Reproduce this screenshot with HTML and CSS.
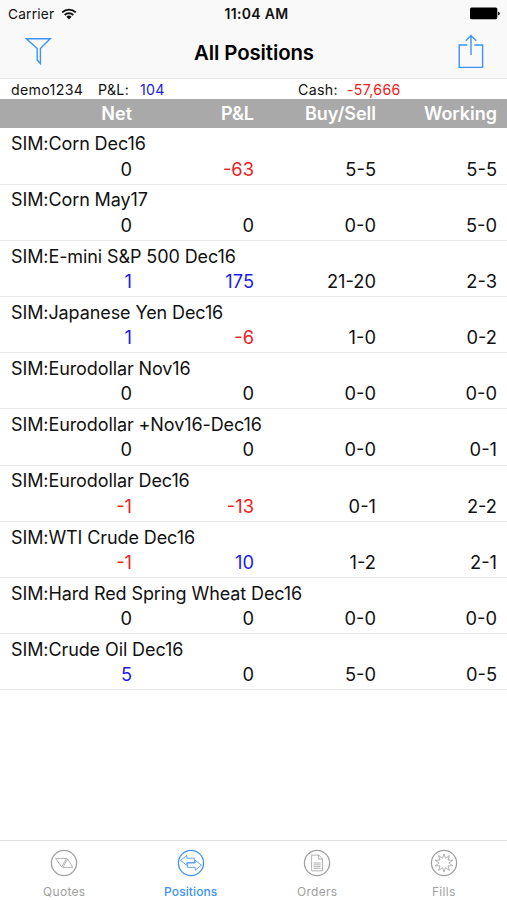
FILE: index.html
```html
<!DOCTYPE html>
<html lang="en">
	<head>
		<meta charset="utf-8">
		<title>All Positions</title>
		<link rel="stylesheet" href="styles.css">
	</head>
	<body>
		<div id="main">
			<div class="top">
				<div class="status">
					<div class="carrier"><span>Carrier</span>
						<svg width="16" height="12" viewBox="0 0 16 12">
							<path d="M1.2 4.4a9.7 9.7 0 0 1 13.6 0M3.7 7a6.1 6.1 0 0 1 8.6 0" fill="none" stroke="#111" stroke-width="1.9"/>
							<path d="M5.4 8.8a3.7 3.7 0 0 1 5.2 0L8 11.6z" fill="#111"/>
						</svg>
					</div>
					<div class="time">11:04 AM</div>
					<div class="battery">
						<svg width="30" height="13" viewBox="0 0 30 13">
							<rect x="0" y="0.5" width="27.3" height="11.8" rx="1.6"/>
							<path d="M28 4.6q1.8 .3 1.8 1.9t-1.8 1.9z"/>
						</svg>
					</div>
				</div>
				<div class="nav">
					<svg class="filter" width="27" height="28" viewBox="0 0 27 28">
						<path d="M1.4 1.8h23.8L15.4 11.6v14.9l-3.2-3.4V11.6z"/>
					</svg>
					<h1>All Positions</h1>
					<svg class="share" width="26" height="35" viewBox="0 0 26 35">
						<path d="M9.4 11H1.2v22.4h23.4V11h-8.2M13 21V1.6M7.8 6.8L13 1.6l5.2 5.2"/>
					</svg>
				</div>
			</div>
			<div class="account">
				<span class="user">demo1234</span>
				<span class="pl">P&amp;L:</span>
				<span class="total blue">104</span>
				<span class="cash">Cash:</span>
				<span class="red">-57,666</span>
			</div>
			<div class="cols head">
				<span>Net</span><span>P&amp;L</span><span>Buy/Sell</span><span>Working</span>
			</div>
			<div class="list">
				<div class="row">
					<div class="name">SIM:Corn Dec16</div>
					<div class="cols"><span>0</span><span class="red">-63</span><span>5-5</span><span>5-5</span></div>
				</div>
				<div class="row">
					<div class="name">SIM:Corn May17</div>
					<div class="cols"><span>0</span><span>0</span><span>0-0</span><span>5-0</span></div>
				</div>
				<div class="row">
					<div class="name">SIM:E-mini S&amp;P 500 Dec16</div>
					<div class="cols"><span class="blue">1</span><span class="blue">175</span><span>21-20</span><span>2-3</span></div>
				</div>
				<div class="row">
					<div class="name">SIM:Japanese Yen Dec16</div>
					<div class="cols"><span class="blue">1</span><span class="red">-6</span><span>1-0</span><span>0-2</span></div>
				</div>
				<div class="row">
					<div class="name">SIM:Eurodollar Nov16</div>
					<div class="cols"><span>0</span><span>0</span><span>0-0</span><span>0-0</span></div>
				</div>
				<div class="row">
					<div class="name">SIM:Eurodollar +Nov16-Dec16</div>
					<div class="cols"><span>0</span><span>0</span><span>0-0</span><span>0-1</span></div>
				</div>
				<div class="row">
					<div class="name">SIM:Eurodollar Dec16</div>
					<div class="cols"><span class="red">-1</span><span class="red">-13</span><span>0-1</span><span>2-2</span></div>
				</div>
				<div class="row">
					<div class="name">SIM:WTI Crude Dec16</div>
					<div class="cols"><span class="red">-1</span><span class="blue">10</span><span>1-2</span><span>2-1</span></div>
				</div>
				<div class="row">
					<div class="name">SIM:Hard Red Spring Wheat Dec16</div>
					<div class="cols"><span>0</span><span>0</span><span>0-0</span><span>0-0</span></div>
				</div>
				<div class="row">
					<div class="name">SIM:Crude Oil Dec16</div>
					<div class="cols"><span class="blue">5</span><span>0</span><span>5-0</span><span>0-5</span></div>
				</div>
			</div>
			<div class="tabs">
				<div class="tab">
					<svg width="28" height="28" viewBox="0 0 28 28">
						<circle cx="14" cy="14" r="12.6"/>
						<path class="thin" d="M5.6 9.4h11.2l-5.2 8.4zM12.8 18.4l5-8.4 5 8.4z"/>
					</svg>
					<span>Quotes</span>
				</div>
				<div class="tab active">
					<svg width="28" height="28" viewBox="0 0 28 28">
						<circle cx="14" cy="14" r="12.6"/>
						<path class="thin" d="M3.6 11.3l6.2-4.9v2.8h7.6v4.4H9.8v2.8zM24.4 16.2l-6.2 5v-2.8h-7.6V14h7.6v-2.8z"/>
					</svg>
					<span>Positions</span>
				</div>
				<div class="tab">
					<svg width="28" height="28" viewBox="0 0 28 28">
						<circle cx="14" cy="14" r="12.6"/>
						<path class="thin" d="M8.6 6.1h7.2l3.7 3.8v12H8.6zM15.6 6.1v4h3.9M10.6 14h7M10.6 15.8h7M10.6 17.6h7M10.6 19.3h7"/>
					</svg>
					<span>Orders</span>
				</div>
				<div class="tab">
					<svg width="28" height="28" viewBox="0 0 28 28">
						<circle cx="14" cy="14" r="12.6"/>
						<path class="thin" d="M14 4.8l1.5 4.5 3.9-2.7-1.4 4.5 4.8 0-3.9 2.9 3.9 2.8h-4.8l1.4 4.6-3.9-2.7-1.5 4.5-1.5-4.5-3.9 2.7 1.4-4.6H5.2l3.9-2.8-3.9-2.9H10L8.6 6.6l3.9 2.7z"/>
					</svg>
					<span>Fills</span>
				</div>
			</div>
		</div>
	</body>
</html>
```
FILE: styles.css
```css
body, html {
	margin:0;
	padding:0;
	font-family:Inter,"Liberation Sans",sans-serif;
	color:#111;
	background-color:#fff;
}
#main {
	display:flex;
	flex-direction:column;
	height:900px;
	overflow:hidden;
}
.top {
	height:78px;
	background-color:#f9f9f9;
	border-bottom:1px solid #e8e8e8;
}
.status {
	display:grid;
	grid-template-columns:1fr auto 1fr;
	align-items:center;
	height:27px;
	padding:0 7px 0 9px;
	font-size:13.7px;
}
.carrier {
	display:flex;
	align-items:center;
	gap:7px;
	letter-spacing:0.2px;
	margin-left:-1px;
}
.time {
	font-weight:600;
	font-size:14px;
	letter-spacing:0.3px;
	margin-left:4px;
}
.battery {
	display:flex;
	justify-content:flex-end;
}
.nav {
	display:flex;
	align-items:center;
	justify-content:space-between;
	height:48px;
	padding:0 23px 0 25px;
}
.nav svg {
	fill:none;
	stroke:#3d93f5;
	stroke-width:1.4;
}
h1 {
	margin:2px 2px 0 0;
	color:#000;
	font-size:20.4px;
	font-weight:600;
	letter-spacing:-0.1px;
}
.account {
	display:flex;
	align-items:center;
	height:20px;
	padding-left:11px;
	font-size:14.2px;
	letter-spacing:0.3px;
}
.user {
	width:87px;
}
.pl {
	width:42px;
}
.total {
	width:158px;
}
.cash {
	width:49px;
}
.cols {
	display:grid;
	grid-template-columns:132px 122px 122px 121px;
	text-align:right;
}
.head {
	height:29px;
	line-height:30px;
	color:#fff;
	background-color:#a9a9a9;
	font-size:18px;
	font-weight:600;
}
.list {
	flex:1;
	padding-top:0.5px;
	font-size:18px;
}
.row {
	box-sizing:border-box;
	height:56.2px;
	padding-top:2.8px;
	line-height:25.2px;
	border-bottom:1px solid #e9e9e9;
}
.row .cols {
	font-size:18.3px;
}
.name {
	padding-left:11px;
	letter-spacing:-0.1px;
}
.blue {
	color:#1c1ce6;
}
.red {
	color:#f02020;
}
.tabs {
	display:grid;
	grid-template-columns:repeat(4, 1fr);
	height:59px;
	padding-left:1px;
	border-top:1px solid #dedede;
}
.tab {
	display:flex;
	flex-direction:column;
	align-items:center;
	padding-top:8px;
	color:#a0a0a0;
	font-size:12px;
	letter-spacing:0.3px;
}
.tab svg {
	fill:none;
	stroke:currentColor;
	stroke-width:1.3;
}
.tab .thin {
	stroke-width:0.8;
}
.tab span {
	margin-top:7px;
}
.active {
	color:#3d93f5;
	font-weight:500;
	letter-spacing:0.1px;
}
```
